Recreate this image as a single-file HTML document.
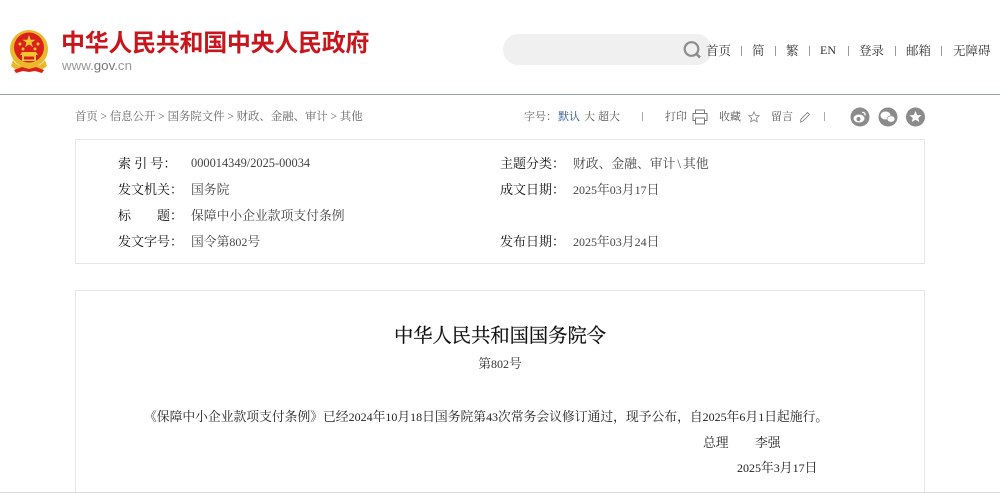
<!DOCTYPE html>
<html lang="zh"><head><meta charset="utf-8"><style>
html,body{margin:0;padding:0;background:#fff}
body{width:1000px;height:493px;position:relative;overflow:hidden;font-family:"Liberation Serif","Noto Serif CJK SC",serif;color:#333;filter:blur(.25px)}
.t{position:absolute;white-space:nowrap;font-size:12.8px;line-height:16px}
.t i{font-style:normal;font-size:12px}
.l{color:#111;font-size:13px}
.v{color:#444}
.n{font-size:12.500px}
.b{position:absolute;box-sizing:border-box}
svg{position:absolute;overflow:visible}
</style></head><body>
<svg style="left:8px;top:29px" width="42" height="46" viewBox="0 0 42 46">
<circle cx="21" cy="20" r="19" fill="#e9b92c"/>
<circle cx="21" cy="18.500" r="15" fill="#d9211c"/>
<polygon points="21,6 22.6,10.7 27.5,10.7 23.5,13.6 25,18.2 21,15.4 17,18.2 18.5,13.6 14.500,10.7 19.4,10.7" fill="#f3c52e"/>
<circle cx="12" cy="15" r="1.500" fill="#f3c52e"/><circle cx="15" cy="20" r="1.500" fill="#f3c52e"/><circle cx="27" cy="20" r="1.500" fill="#f3c52e"/><circle cx="30" cy="15" r="1.500" fill="#f3c52e"/>
<path d="M12 26h18l-2-3H14z" fill="#f3c52e"/><rect x="14" y="26" width="14" height="6" fill="#f3c52e"/><rect x="16" y="27.500" width="10" height="3" fill="#d9211c"/>
<path d="M5 31c3 5 8 7 16 7s13-2 16-7l2 6c-4 4-10 5-18 5S7 41 3 37z" fill="#e9b92c"/>
<path d="M6 41l8-3 7 2 7-2 8 3-2 3-7-2-6 1-6-1-7 2z" fill="#d9211c"/>
</svg>
<div class="t" style="left:61px;top:28px;font:bold 24px/32px 'Liberation Sans','Noto Sans CJK SC',sans-serif;color:#c8161d;letter-spacing:-.3px">中华人民共和国中央人民政府</div>
<div class="t" style="left:62px;top:58px;font:13.300px/16px 'Liberation Sans',sans-serif;color:#999">www.<span style="color:#777">gov</span>.cn</div>
<div class="b" style="left:503px;top:34px;width:209px;height:31px;border-radius:16px;background:#f0f0f0"></div>
<svg style="left:683px;top:40px" width="19" height="19" viewBox="0 0 19 19"><circle cx="8.500" cy="9" r="6.800" fill="none" stroke="#8c8c8c" stroke-width="2.200"/><path d="M13.300 13.800l3.700 3.700" stroke="#8c8c8c" stroke-width="2.600"/></svg>
<div class="t n" style="left:706px;top:43px">首页</div>
<div class="t n" style="left:752px;top:43px">简</div>
<div class="t n" style="left:786px;top:43px">繁</div>
<div class="t" style="left:820px;top:42px"><i>EN</i></div>
<div class="t n" style="left:859px;top:43px">登录</div>
<div class="t n" style="left:906px;top:43px">邮箱</div>
<div class="t n" style="left:953px;top:43px">无障碍</div>
<div class="b" style="left:741px;top:46px;width:1px;height:10px;background:#999"></div>
<div class="b" style="left:775px;top:46px;width:1px;height:10px;background:#999"></div>
<div class="b" style="left:809px;top:46px;width:1px;height:10px;background:#999"></div>
<div class="b" style="left:848px;top:46px;width:1px;height:10px;background:#999"></div>
<div class="b" style="left:895px;top:46px;width:1px;height:10px;background:#999"></div>
<div class="b" style="left:941px;top:46px;width:1px;height:10px;background:#999"></div>
<div class="b" style="left:0;top:94px;width:1000px;height:1px;background:#94a0c2"></div>

<div class="t" style="left:75px;top:109px;color:#666;font-size:11.400px">首页 &gt; 信息公开 &gt; 国务院文件 &gt; 财政、金融、审计 &gt; 其他</div>
<div class="t" style="left:524px;top:109px;font-size:11px;color:#666">字号：</div>
<div class="t" style="left:558px;top:109px;font-size:11px;color:#1f4a8c">默认</div>
<div class="t" style="left:584px;top:109px;font-size:11px;color:#555">大</div>
<div class="t" style="left:598px;top:109px;font-size:11px;color:#555">超大</div>
<div class="b" style="left:642px;top:112px;width:1px;height:9px;background:#aaa"></div>
<div class="t" style="left:665px;top:109px;font-size:11px;color:#555">打印</div>
<svg style="left:692px;top:109px" width="16" height="16" viewBox="0 0 16 16" fill="none" stroke="#777"><path d="M3.500 4.500V1h9v3.500M3.500 11.500H1V4.500h14v7h-2.500M3.500 9h9v6h-9z"/></svg>
<div class="t" style="left:719px;top:109px;font-size:11px;color:#555">收藏</div>
<svg style="left:748px;top:111px" width="12" height="12" viewBox="0 0 12 12" fill="none" stroke="#888" stroke-width=".8"><polygon points="6,.8 7.500,4.300 11.300,4.600 8.400,7.100 9.300,10.900 6,8.900 2.700,10.900 3.600,7.100 .7,4.600 4.500,4.300"/></svg>
<div class="t" style="left:771px;top:109px;font-size:11px;color:#555">留言</div>
<svg style="left:799px;top:111px" width="12" height="12" viewBox="0 0 12 12" fill="none" stroke="#888" stroke-width=".9"><path d="M1.500 11l.5-3L8.500 1.500l2 2L4 10z"/></svg>
<div class="b" style="left:824px;top:112px;width:1px;height:9px;background:#aaa"></div>
<svg style="left:850px;top:107px" width="76" height="20" viewBox="0 0 76 20">
<circle cx="10" cy="10" r="9.500" fill="#8b8b8b"/><circle cx="38" cy="10" r="9.500" fill="#8b8b8b"/><circle cx="65.500" cy="10" r="9.500" fill="#8b8b8b"/>
<ellipse cx="9" cy="11.500" rx="5.500" ry="4" fill="#fff"/><circle cx="8.500" cy="12" r="2" fill="#8b8b8b"/><path d="M12 5.500c2-.5 3.500 1 3 3" fill="none" stroke="#fff" stroke-width="1.200"/>
<ellipse cx="35.500" cy="8.500" rx="5" ry="4" fill="#fff"/><ellipse cx="41" cy="12" rx="4" ry="3.200" fill="#fff" stroke="#8b8b8b" stroke-width=".6"/>
<polygon points="65.500,4 67.200,8 71.500,8.300 68.200,11 69.300,15 65.500,12.800 61.700,15 62.800,11 59.500,8.300 63.800,8" fill="#fff"/>
</svg>

<div class="b" style="left:75px;top:139px;width:850px;height:125px;border:1px solid #e6e6e6"></div>
<div class="t l" style="left:118px;top:156px">索 引 号：</div>
<div class="t v" style="left:191px;top:155px;font-size:12.400px">000014349/2025-00034</div>
<div class="t l" style="left:118px;top:182px">发文机关：</div>
<div class="t v" style="left:191px;top:182px">国务院</div>
<div class="t l" style="left:118px;top:208px">标</div>
<div class="t l" style="left:157px;top:208px">题：</div>
<div class="t v" style="left:191px;top:208px">保障中小企业款项支付条例</div>
<div class="t l" style="left:118px;top:234px">发文字号：</div>
<div class="t v" style="left:191px;top:234px">国令第<i>802</i>号</div>
<div class="t l" style="left:500px;top:156px">主题分类：</div>
<div class="t v" style="left:573px;top:156px">财政、金融、审计<span style="margin:0 2px">\</span>其他</div>
<div class="t l" style="left:500px;top:182px">成文日期：</div>
<div class="t v" style="left:573px;top:182px"><i>2025</i>年<i>03</i>月<i>17</i>日</div>
<div class="t l" style="left:500px;top:234px">发布日期：</div>
<div class="t v" style="left:573px;top:234px"><i>2025</i>年<i>03</i>月<i>24</i>日</div>

<div class="b" style="left:75px;top:290px;width:850px;height:203px;border:1px solid #e6e6e6;border-bottom:0"></div>
<div class="b" style="left:0;top:492px;width:1000px;height:1px;background:#d8d8d8"></div>
<div class="t" style="left:0;width:1000px;top:324px;text-align:center;font-size:19.300px;line-height:26px;color:#111;-webkit-text-stroke:.25px #111">中华人民共和国国务院令</div>
<div class="t" style="left:0;width:1000px;top:356px;text-align:center;color:#333">第<i>802</i>号</div>
<div class="t" style="left:144px;top:409px;color:#222;letter-spacing:-.01px">《保障中小企业款项支付条例》已经<i>2024</i>年<i>10</i>月<i>18</i>日国务院第<i>43</i>次常务会议修订通过，现予公布，自<i>2025</i>年<i>6</i>月<i>1</i>日起施行。</div>
<div class="t" style="left:703px;top:435px;color:#222">总理</div>
<div class="t" style="left:755px;top:435px;color:#222">李强</div>
<div class="t" style="left:737px;top:460px;color:#222"><i>2025</i>年<i>3</i>月<i>17</i>日</div>
</body></html>
